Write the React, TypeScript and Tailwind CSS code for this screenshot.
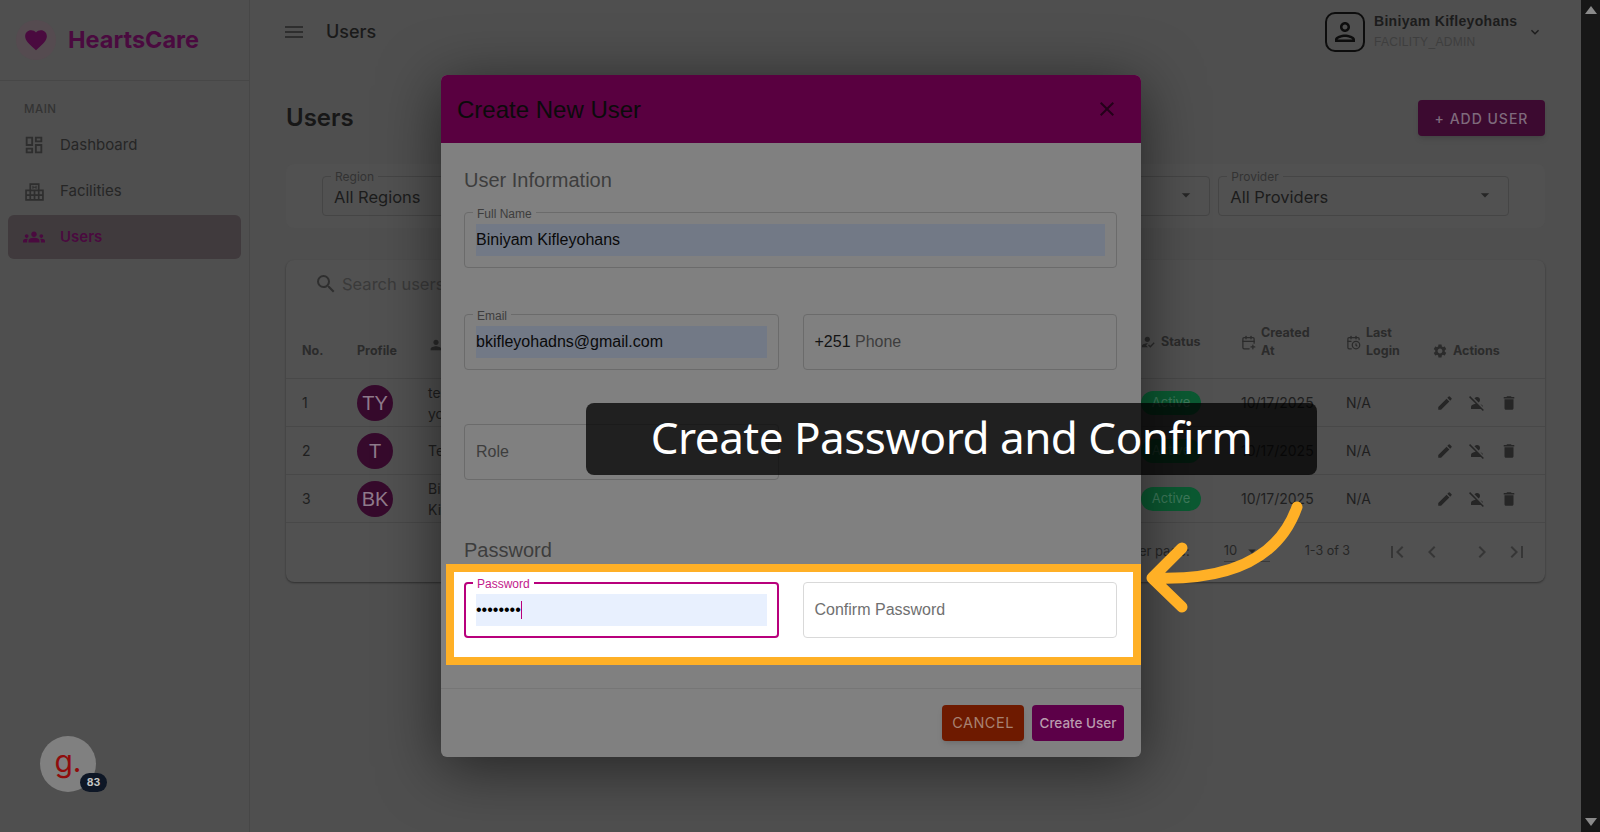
import type { ReactNode } from "react";
import {
  MdArrowDropDown,
  MdChevronLeft,
  MdChevronRight,
  MdClose,
  MdDelete,
  MdEdit,
  MdFavorite,
  MdFirstPage,
  MdGroups,
  MdHowToReg,
  MdKeyboardArrowDown,
  MdLastPage,
  MdMenu,
  MdOutlineDashboard,
  MdOutlinePerson,
  MdPerson,
  MdPersonOff,
  MdSearch,
  MdSettings,
} from "react-icons/md";
import { LuCalendarClock, LuCalendarPlus } from "react-icons/lu";

const SANS = "font-['Inter',sans-serif]";
const ARIAL = "font-['Liberation_Sans',sans-serif]";

const rows = [
  { no: 1, initials: "TY", name: ["test", "yohannes"] },
  { no: 2, initials: "T", name: ["Test"] },
  { no: 3, initials: "BK", name: ["Biniyam", "Kifleyohans"] },
];

function HospitalIcon() {
  return (
    <svg width="19" height="19" viewBox="0 0 18 18" fill="none" stroke="#2e2e2e" strokeWidth="1.6">
      <path d="M1 8h4V2h8v6h4v9H1z" />
      <path d="M1 12.5h16M9 8v9M5 8v9M13 8v9M5 8h8" />
      <path d="M7.5 3.5v3M10.5 3.5v3M7.5 5h3" strokeWidth="1" />
    </svg>
  );
}

function NavItem({ icon, label, active }: { icon: ReactNode; label: string; active?: boolean }) {
  return (
    <div
      className={`mx-2 flex h-[44px] items-center gap-[15px] rounded-md pl-[15px] text-[15px] ${
        active ? "bg-[#403a3d] font-semibold text-[#4a0a3f]" : "text-[#262626]"
      }`}
    >
      <span className="flex w-[22px] justify-center">{icon}</span>
      {label}
    </div>
  );
}

function SelectBox({ label, value }: { label?: string; value?: string }) {
  return (
    <div className="relative h-[40px] rounded border border-[#454545] pl-[11px]">
      {label && (
        <span className="absolute -top-[8px] left-[8px] bg-[#515151] px-1 text-[12px] leading-[15px] text-[#333333]">
          {label}
        </span>
      )}
      {value && <div className="pt-[8px] text-[16.5px] leading-[24px] text-[#1c1c1c]">{value}</div>}
      <MdArrowDropDown className="absolute right-[13px] top-[8px] text-[#262626]" size={20} />
    </div>
  );
}

function HeadCell({ icon, lines }: { icon?: ReactNode; lines: string[] }) {
  return (
    <div className="flex items-center gap-[5px] pl-4 text-[12.5px] font-bold leading-[18px] text-[#2b2b2b]">
      {icon}
      <div>
        {lines.map((l) => (
          <div key={l}>{l}</div>
        ))}
      </div>
    </div>
  );
}

function Field({
  label,
  value,
  placeholder,
  prefix,
  filled,
}: {
  label?: string;
  value?: string;
  placeholder?: string;
  prefix?: string;
  filled?: boolean;
}) {
  return (
    <div className="relative flex h-[56px] items-center rounded border border-[#6b6b6b] px-[11px]">
      {label && (
        <span className="absolute -top-[6px] left-[8px] bg-[#808080] px-[4px] text-[12px] leading-[14px] text-[#3d3d3d]">
          {label}
        </span>
      )}
      {filled ? (
        <div className="flex h-[32px] w-full items-center bg-[#727986] text-[16px] text-[#0a0a0a]">{value}</div>
      ) : (
        <div className="text-[16px] text-[#3d3d3d]">
          {prefix && <span className="text-[#141414]">{prefix} </span>}
          {placeholder}
        </div>
      )}
    </div>
  );
}

function UserModal() {
  return (
    <div
      className={`absolute left-[441px] top-[75px] flex h-[682px] w-[700px] flex-col overflow-hidden rounded-[6px] bg-[#808080] shadow-[0_10px_60px_rgba(0,0,0,0.55)] ${ARIAL}`}
    >
      <div className="flex h-[68px] shrink-0 items-center justify-between bg-[#590040] pl-4 pr-[22px] text-[#0b0b0b]">
        <span className="pt-px text-[24px]">Create New User</span>
        <MdClose size={24} className="text-[#24001a]" />
      </div>

      <div className="flex-1 pl-[23px] pr-[24px]">
        <h3 className="mt-[23px] h-[28px] text-[20px] leading-[28px] text-[#3d3d3d]">User Information</h3>
        <div className="mt-[18px]">
          <Field label="Full Name" value="Biniyam Kifleyohans" filled />
        </div>
        <div className="mt-[46px] grid grid-cols-2 gap-6">
          <Field label="Email" value="bkifleyohadns@gmail.com" filled />
          <Field prefix="+251" placeholder="Phone" />
        </div>
        <div className="mt-[54px] grid grid-cols-2 gap-6">
          <Field placeholder="Role" />
        </div>
        <h3 className="mt-[56px] h-[28px] text-[20px] leading-[28px] text-[#3d3d3d]">Password</h3>

        {/* recuadro resaltado: lo unico sin oscurecer */}
        <div className="-ml-[18px] -mr-[24px] border-[8px] border-[#ffb026] bg-white pb-[19px] pl-[10px] pr-[16px] pt-[10px]">
          <div className="grid grid-cols-2 gap-6">
            <div className="relative flex h-[56px] items-center rounded border-2 border-[#b8007c] px-[10px]">
              <span className="absolute -top-[7px] left-[7px] bg-white px-[4px] text-[12px] leading-[14px] text-[#c2188b]">
                Password
              </span>
              <div className="flex h-[32px] w-full items-center bg-[#e8f0fe] text-[16px] text-black">
                ••••••••
                <span className="h-[18px] w-px bg-[#b8007c]" />
              </div>
            </div>
            <div className="flex h-[56px] items-center rounded border border-[#d9d9d9] px-[11px] text-[16px] text-[#707070]">
              Confirm Password
            </div>
          </div>
        </div>
      </div>

      <div className="flex h-[69px] shrink-0 items-center justify-end gap-2 border-t border-[#767676] pr-[17px]">
        <div className={`flex h-[36px] w-[82px] items-center justify-center rounded bg-[#6e1a00] text-[14.5px] tracking-[0.5px] text-[#a88272] shadow-md ${SANS}`}>
          CANCEL
        </div>
        <div className={`flex h-[36px] w-[92px] items-center justify-center rounded bg-[#5c0048] text-[13.5px] font-medium text-[#b99aae] ${SANS}`}>
          Create User
        </div>
      </div>
    </div>
  );
}

export default function App() {
  return (
    <div className={`relative flex h-[832px] w-[1600px] overflow-hidden bg-[#4f4f4f] ${SANS}`}>
      {/* Sidebar */}
      <aside className="relative w-[250px] shrink-0 border-r border-[#474747]">
        <div className="flex h-[81px] items-center gap-[12px] border-b border-[#474747] pl-4">
          <div className="flex h-[40px] w-[40px] items-center justify-center rounded-full bg-[#554b50]">
            <MdFavorite size={26} className="text-[#4a0a3f]" />
          </div>
          <span className="text-[23.5px] font-bold text-[#4a0a3f]">HeartsCare</span>
        </div>
        <div className="mb-[5px] ml-6 mt-[20px] text-[11.5px] font-medium tracking-[0.5px] text-[#333333]">MAIN</div>
        <div className="flex flex-col gap-[2px]">
          <NavItem icon={<MdOutlineDashboard size={22} className="text-[#2e2e2e]" />} label="Dashboard" />
          <NavItem icon={<HospitalIcon />} label="Facilities" />
          <NavItem icon={<MdGroups size={24} className="text-[#4a0a3f]" />} label="Users" active />
        </div>

        <div className="absolute left-[40px] top-[736px] flex h-[56px] w-[56px] items-center justify-center rounded-full bg-[#808080] pb-[6px] text-[30px] leading-none text-[#8f0c0c]">
          g.
        </div>
        <div className="absolute left-[80px] top-[773px] flex h-[19px] w-[27px] items-center justify-center rounded-full bg-[#0e1726] text-[10.5px] font-bold text-[#c4c4c4]">
          83
        </div>
      </aside>

      {/* Main */}
      <main className="min-w-0 flex-1">
        <header className="flex h-[63px] items-center pl-[32px] pr-[38px]">
          <MdMenu size={24} className="text-[#2e2e2e]" />
          <span className="ml-[20px] text-[18px] font-medium text-[#1a1a1a]">Users</span>
          <div className="ml-auto flex items-center">
            <div className="flex h-[40px] w-[40px] items-center justify-center rounded-[10px] border-[2px] border-[#0d0d0d]">
              <MdOutlinePerson size={30} className="text-[#0d0d0d]" />
            </div>
            <div className={`ml-[9px] w-[153px] ${ARIAL}`}>
              <div className="text-[14px] font-bold leading-[20px] tracking-[0.3px] text-[#1c1c1c]">
                Biniyam Kifleyohans
              </div>
              <div className="mt-px text-[12px] leading-[20px] tracking-[0.3px] text-[#3e3e3e]">
                FACILITY_ADMIN
              </div>
            </div>
            <MdKeyboardArrowDown size={16} className="text-[#1c1c1c]" />
          </div>
        </header>

        <div className="px-[36px]">
          <div className="flex h-[101px] items-start justify-between pt-[37px]">
            <h1 className="pt-px text-[24px] font-semibold leading-[34px] text-[#171717]">Users</h1>
            <div className="flex h-[36px] w-[127px] items-center justify-center rounded bg-[#3c0a30] text-[14px] font-medium tracking-[1px] text-[#7f6a7c] shadow-md">
              + ADD USER
            </div>
          </div>

          <div className="grid h-[64px] grid-cols-4 gap-2 rounded-lg bg-[#515151] pl-[36px] pr-[36px] pt-[12px]">
            <SelectBox label="Region" value="All Regions" />
            <SelectBox />
            <SelectBox />
            <SelectBox label="Provider" value="All Providers" />
          </div>

          <div className="mt-[32px] h-[322px] rounded-lg bg-[#515151] shadow-[0_1px_2px_rgba(0,0,0,0.4)]">
            <div className="flex h-[48px] items-center pl-[28px] text-[16.5px] text-[#3a3a3a]">
              <MdSearch size={24} className="mr-[4px] text-[#2f2f2f]" />
              Search users
            </div>

            <div className="grid h-[71px] grid-cols-[55px_71px_714px_99px_105px_86px_129px] items-center border-b border-[#484848] pt-[2px]">
              <div className="self-end pb-[18px]"><HeadCell lines={["No."]} /></div>
              <div className="self-end pb-[18px]"><HeadCell lines={["Profile"]} /></div>
              <div className="self-end pb-[24px]"><HeadCell icon={<MdPerson size={16} />} lines={["Name"]} /></div>
              <div className="-ml-[2px] pb-[4px]"><HeadCell icon={<MdHowToReg size={16} />} lines={["Status"]} /></div>
              <div className="pb-[4px]"><HeadCell icon={<LuCalendarPlus size={15} />} lines={["Created", "At"]} /></div>
              <div className="pb-[4px]"><HeadCell icon={<LuCalendarClock size={15} />} lines={["Last", "Login"]} /></div>
              <div className="self-end pb-[18px]"><HeadCell icon={<MdSettings size={16} />} lines={["Actions"]} /></div>
            </div>

            {rows.map((r) => (
              <div
                key={r.no}
                className="grid h-[48px] grid-cols-[55px_71px_714px_99px_105px_86px_129px] items-center border-b border-[#484848] text-[14px] text-[#1f1f1f]"
              >
                <div className="pl-4">{r.no}</div>
                <div className="pl-4">
                  <div className={`flex h-[36px] w-[36px] items-center justify-center rounded-full bg-[#360a2c] text-[20px] text-[#8f7a8b] ${ARIAL}`}>
                    {r.initials}
                  </div>
                </div>
                <div className="pl-4 leading-[21px]">
                  {r.name.map((n) => (
                    <div key={n}>{n}</div>
                  ))}
                </div>
                <div className="pl-[15px]">
                  <span className="inline-flex h-[24px] w-[60px] items-center justify-center rounded-full bg-[#0b5a32] text-[13px] text-[#3f7a5c]">
                    Active
                  </span>
                </div>
                <div className="pl-4">10/17/2025</div>
                <div className="pl-4">N/A</div>
                <div className="flex items-center gap-[14px] pl-[20px] text-[#262626]">
                  <MdEdit size={18} />
                  <MdPersonOff size={18} />
                  <MdDelete size={18} />
                </div>
              </div>
            ))}

            <div className="flex h-[57px] items-center pr-[16px] text-[13px] text-[#262626]">
              <span className="ml-auto">Rows per page:</span>
              <span className="ml-[34px] flex w-[46px] items-center border-b border-[#3a3a3a]">
                10
                <MdArrowDropDown size={18} className="ml-[6px]" />
              </span>
              <span className="ml-[35px] text-[12.5px]">1-3 of 3</span>
              <span className="ml-[35px] flex items-center gap-[11px] text-[#363636]">
                <MdFirstPage size={24} />
                <MdChevronLeft size={24} />
                <span className="w-[4px]" />
                <MdChevronRight size={24} />
                <MdLastPage size={24} />
              </span>
            </div>
          </div>
        </div>
      </main>

      {/* Scrollbar */}
      <div className="flex w-[19px] shrink-0 flex-col items-center justify-between bg-[#171717] py-[6px]">
        <span className="h-0 w-0 border-x-[6px] border-b-[8px] border-x-transparent border-b-[#8a8a8a]" />
        <span className="h-0 w-0 border-x-[6px] border-t-[8px] border-x-transparent border-t-[#8a8a8a]" />
      </div>

      <UserModal />

      {/* Caption */}
      <div className="absolute left-[586px] top-[403px] flex h-[72px] w-[731px] items-center justify-center rounded-lg bg-black/75 pb-[4px] font-['Noto_Sans',sans-serif] text-[44px] tracking-[-0.5px] text-white">
        Create Password and Confirm
      </div>

      {/* Arrow */}
      <svg className="absolute left-[1140px] top-[495px]" width="175" height="125" viewBox="0 0 175 125" fill="none">
        <path
          d="M157 12C140 60 95 86 14 83M42 53L12 83L42 112"
          stroke="#ffb026"
          strokeWidth="11"
          strokeLinecap="round"
          strokeLinejoin="round"
        />
      </svg>
    </div>
  );
}
